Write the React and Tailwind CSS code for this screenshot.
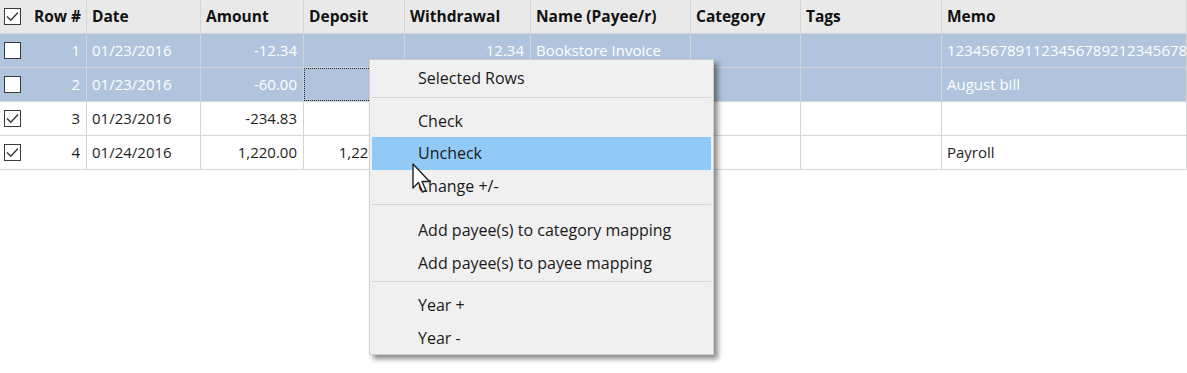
// Transactions grid with a right-click context menu open

const font = { fontFamily: '"Open Sans", "Noto Sans", sans-serif' };

const columns = [
  { key: 'row', label: 'Row #', w: 'w-[87px]', align: 'right' },
  { key: 'date', label: 'Date', w: 'w-[114px]', align: 'left' },
  { key: 'amount', label: 'Amount', w: 'w-[103px]', align: 'right' },
  { key: 'deposit', label: 'Deposit', w: 'w-[101px]', align: 'right' },
  { key: 'withdrawal', label: 'Withdrawal', w: 'w-[126px]', align: 'right' },
  { key: 'name', label: 'Name (Payee/r)', w: 'w-[160px]', align: 'left' },
  { key: 'category', label: 'Category', w: 'w-[110px]', align: 'left' },
  { key: 'tags', label: 'Tags', w: 'w-[141px]', align: 'left' },
  { key: 'memo', label: 'Memo', w: 'flex-1', align: 'left' },
];

const rows = [
  { checked: false, selected: true, row: '1', date: '01/23/2016', amount: '-12.34', deposit: '', withdrawal: '12.34', name: 'Bookstore Invoice', memo: '1234567891123456789212345678931234' },
  { checked: false, selected: true, focus: true, row: '2', date: '01/23/2016', amount: '-60.00', deposit: '', withdrawal: '', name: '', memo: 'August bill' },
  { checked: true, row: '3', date: '01/23/2016', amount: '-234.83', deposit: '', withdrawal: '', name: '', memo: '' },
  { checked: true, row: '4', date: '01/24/2016', amount: '1,220.00', deposit: '1,220.00', withdrawal: '', name: '', memo: 'Payroll' },
];

function Box({ checked }) {
  return (
    <div className="w-[17px] h-[17px] border-[1.5px] border-[#3a3a3a] bg-white flex items-center justify-center shrink-0">
      {checked && (
        <svg width="13" height="11" viewBox="0 0 13 11">
          <path d="M1 5.5 L4.8 9.2 L12 1.5" fill="none" stroke="#333" strokeWidth="1.3" />
        </svg>
      )}
    </div>
  );
}

function Cursor() {
  return (
    <svg width="20" height="32" viewBox="0 0 20 32" className="absolute left-[412px] top-[163px]">
      <path d="M1 1 L1 25 L6.5 19.5 L10.5 29 L14 27.5 L10 18.5 L17.5 18.5 Z" fill="#fff" stroke="#222" strokeWidth="1.4" strokeLinejoin="round" />
    </svg>
  );
}

function MenuItem({ label, active }) {
  return (
    <div className={`h-[32.5px] mx-[2px] flex items-center pl-[46px] text-[16px] text-[#1a1a1a] ${active ? 'bg-[#91c9f7]' : ''}`}>
      {label}
    </div>
  );
}

function Sep({ h = 'h-[10px]' }) {
  return (
    <div className={`${h} pt-[2px] px-[2px]`}>
      <div className="h-px bg-[#d7d7d7]" />
    </div>
  );
}

export default function App() {
  return (
    <div className="relative w-[1187px] h-[373px] bg-white overflow-hidden" style={font}>
      {/* header */}
      <div className="flex h-[34px] bg-[#e9e9e9] border-b border-[#d2d2d2]">
        {columns.map((c) => (
          <div key={c.key} className={`${c.w} h-full border-r border-[#d4d4d4] flex items-center text-[15.5px] font-bold text-[#111] ${c.key === 'row' ? 'pl-[4px] gap-[13px]' : 'pl-[5px]'}`}>
            {c.key === 'row' && <Box checked />}
            {c.label}
          </div>
        ))}
      </div>

      {/* rows */}
      {rows.map((r) => (
        <div key={r.row} className={`flex h-[34px] border-b border-[#d6d6d6] text-[15px] ${r.selected ? 'bg-[#b0c4de] text-white' : 'bg-white text-[#1e1e1e]'}`}>
          {columns.map((c) => {
            const focused = r.focus && c.key === 'deposit';
            return (
              <div
                key={c.key}
                className={`${c.w} h-full flex items-center whitespace-nowrap overflow-hidden ${c.align === 'right' ? 'justify-end pr-[6px]' : 'pl-[5px]'} ${focused ? 'border border-dotted border-[#222]' : 'border-r border-[#d4d4d4]'}`}
              >
                {c.key === 'row' ? (
                  <div className="flex-1 flex items-center justify-between pl-[4px]">
                    <Box checked={r.checked} />
                    <span>{r.row}</span>
                  </div>
                ) : (
                  r[c.key]
                )}
              </div>
            );
          })}
        </div>
      ))}

      {/* context menu */}
      <div className="absolute left-[369px] top-[59px] w-[345px] bg-[#f0f0f0] border border-[#cfcfcf] pt-[2px] shadow-[4px_4px_5px_rgba(0,0,0,0.45)]">
        <MenuItem label="Selected Rows" />
        <Sep />
        <MenuItem label="Check" />
        <MenuItem label="Uncheck" active />
        <MenuItem label="Change +/-" />
        <Sep h="h-[12px]" />
        <MenuItem label="Add payee(s) to category mapping" />
        <MenuItem label="Add payee(s) to payee mapping" />
        <Sep />
        <MenuItem label="Year +" />
        <MenuItem label="Year -" />
      </div>

      <Cursor />
    </div>
  );
}
